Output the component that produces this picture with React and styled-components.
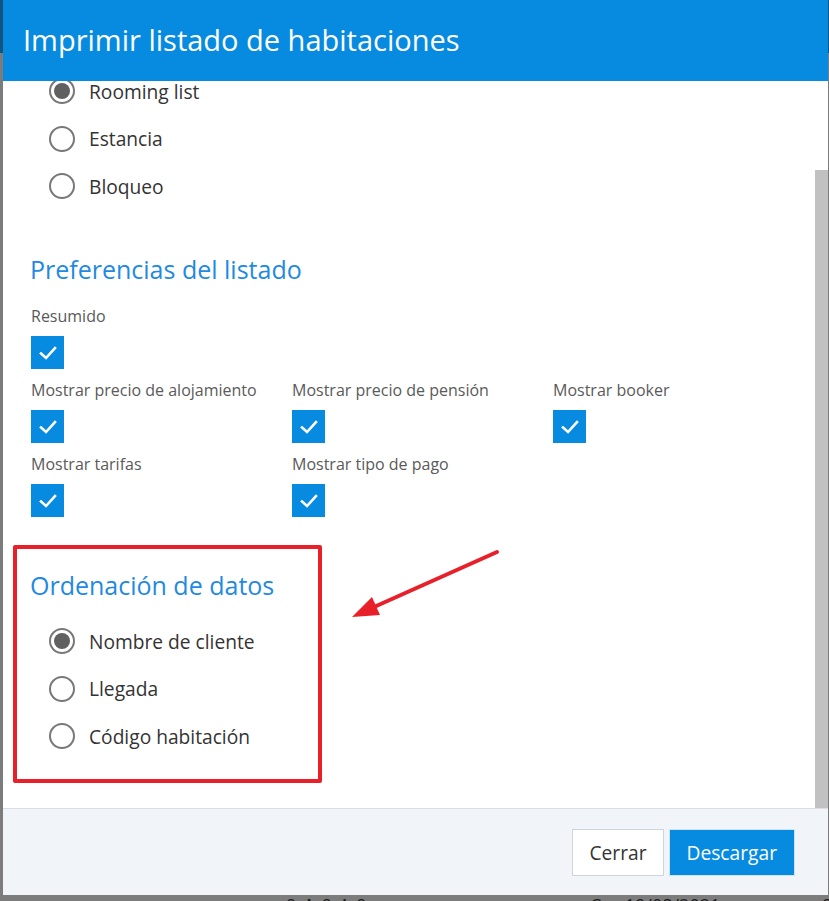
import React from "react";
import styled, { createGlobalStyle } from "styled-components";

const Global = createGlobalStyle`
  html, body { margin: 0; padding: 0; }
  body {
    font-family: "Open Sans", "Liberation Sans", sans-serif;
    background: #7c7c7c;
    overflow: hidden;
  }
  #root { height: 901px; overflow: hidden; }
`;

const Backdrop = styled.div`
  width: 829px;
  height: 901px;
  display: flex;
  flex-direction: column;
  background: linear-gradient(to bottom, #0f5680 0 53px, #7c7c7c 53px);
`;

const Modal = styled.div`
  position: relative;
  margin-left: 3px;
  width: 825px;
  height: 895px;
  flex: none;
  display: flex;
  flex-direction: column;
  background: #fff;
`;

const Header = styled.div`
  height: 81px;
  flex: none;
  background: #078be1;
  display: flex;
  align-items: center;
  padding-left: 20px;
  position: relative;
  z-index: 1;
`;

const Title = styled.h1`
  margin: 0;
  font-size: 29px;
  font-weight: 400;
  color: #fff;
  padding-bottom: 3px;
`;

const Body = styled.div`
  flex: 1;
  display: flex;
  overflow: hidden;
`;

const Content = styled.div`
  flex: 1;
  padding-left: 28px;
  display: flex;
  flex-direction: column;
`;

const ScrollTrack = styled.div`
  width: 13px;
  flex: none;
  display: flex;
  flex-direction: column;
`;

const ScrollThumb = styled.div`
  margin-top: 89px;
  flex: 1;
  background: #c1c1c1;
`;

const RadioList = styled.div`
  display: flex;
  flex-direction: column;
  gap: ${(p) => p.$gap || 23.5}px;
  margin: ${(p) => p.$margin || "0"};
  padding-left: 18px;
`;

const RadioRow = styled.label`
  display: flex;
  align-items: center;
  height: 24px;
  gap: 14px;
  font-size: 19.2px;
  color: #333;
  white-space: nowrap;
`;

const RadioCircle = styled.span`
  box-sizing: border-box;
  width: 26px;
  height: 26px;
  border-radius: 50%;
  border: 2px solid #787878;
  display: flex;
  align-items: center;
  justify-content: center;
  flex: none;
  &::after {
    content: "";
    width: 16px;
    height: 16px;
    border-radius: 50%;
    background: ${(p) => (p.$checked ? "#606060" : "transparent")};
  }
`;

const SectionTitle = styled.h2`
  margin: ${(p) => p.$margin || "0"};
  margin-left: -1px;
  font-size: 25px;
  line-height: 32px;
  font-weight: 400;
  color: #1f8ae2;
  white-space: nowrap;
`;

const FieldGrid = styled.div`
  display: grid;
  grid-template-columns: repeat(3, 261px);
  row-gap: 10px;
  margin-top: ${(p) => p.$mt || 0}px;
`;

const Field = styled.div`
  display: flex;
  flex-direction: column;
  align-items: flex-start;
  gap: 11px;
  grid-column: ${(p) => (p.$full ? "1 / -1" : "auto")};
`;

const FieldLabel = styled.span`
  font-size: 16px;
  line-height: 20px;
  color: #5a5a5a;
  white-space: nowrap;
  margin-top: 1px;
  margin-bottom: -1px;
`;

const CheckBox = styled.span`
  width: 33px;
  height: 33px;
  background: #078be1;
  display: flex;
  align-items: center;
  justify-content: center;
`;

const Highlight = styled.div`
  margin: 28px 0 0 -18px;
  width: 309px;
  box-sizing: border-box;
  border: 4px solid #e8202a;
  border-radius: 2px;
  padding: 20px 0 31px 14px;
  display: flex;
  flex-direction: column;
`;

const Arrow = styled.svg`
  position: absolute;
  left: 337px;
  top: 540px;
  z-index: 2;
`;

const Footer = styled.div`
  height: 87px;
  flex: none;
  box-sizing: border-box;
  border-top: 1px solid #d9dee4;
  background: #f1f5f9;
  display: flex;
  justify-content: flex-end;
  align-items: flex-start;
  gap: 5px;
  padding: 20px 33px 0 0;
`;

const Button = styled.button`
  height: 47px;
  box-sizing: border-box;
  padding: 0 ${(p) => (p.$primary ? 17 : 16)}px;
  font-family: "Open Sans", "Liberation Sans", sans-serif;
  font-size: 19.2px;
  border: 1px solid ${(p) => (p.$primary ? "#cfe3f2" : "#cdd4dc")};
  background: ${(p) => (p.$primary ? "#078be1" : "#fff")};
  color: ${(p) => (p.$primary ? "#fff" : "#333")};
  cursor: pointer;
`;

const BackdropRow = styled.div`
  height: 6px;
  overflow: hidden;
  position: relative;
  font-family: "Open Sans", sans-serif;
  font-size: 18px;
  line-height: 18px;
  color: #1d1d1d;
  white-space: pre;
`;

const Ghost = styled.span`
  position: absolute;
  top: 1px;
  left: ${(p) => p.$x}px;
`;

const Check = () => (
  <svg width="18" height="14" viewBox="0 0 18 14">
    <path d="M2 7.5 L7 12 L16 2" fill="none" stroke="#fff" strokeWidth="2.6" strokeLinecap="square" />
  </svg>
);

const Radio = ({ label, checked }) => (
  <RadioRow>
    <RadioCircle $checked={checked} />
    {label}
  </RadioRow>
);

const Checked = ({ label, full }) => (
  <Field $full={full}>
    <FieldLabel>{label}</FieldLabel>
    <CheckBox>
      <Check />
    </CheckBox>
  </Field>
);

export default function App() {
  return (
    <Backdrop>
      <Global />
      <Modal>
        <Header>
          <Title>Imprimir listado de habitaciones</Title>
        </Header>
        <Body>
          <Content>
            <RadioList $margin="-2px 0 0 0">
              <Radio label="Rooming list" checked />
              <Radio label="Estancia" />
              <Radio label="Bloqueo" />
            </RadioList>
            <SectionTitle $margin="55px 0 0 0">Preferencias del listado</SectionTitle>
            <FieldGrid $mt={20}>
              <Checked label="Resumido" full />
              <Checked label="Mostrar precio de alojamiento" />
              <Checked label="Mostrar precio de pensión" />
              <Checked label="Mostrar booker" />
              <Checked label="Mostrar tarifas" />
              <Checked label="Mostrar tipo de pago" />
            </FieldGrid>
            <Highlight>
              <SectionTitle>Ordenación de datos</SectionTitle>
              <RadioList $margin="28px 0 0 0">
                <Radio label="Nombre de cliente" checked />
                <Radio label="Llegada" />
                <Radio label="Código habitación" />
              </RadioList>
            </Highlight>
          </Content>
          <ScrollTrack>
            <ScrollThumb />
          </ScrollTrack>
        </Body>
        <Footer>
          <Button>Cerrar</Button>
          <Button $primary>Descargar</Button>
        </Footer>
        <Arrow width="170" height="90" viewBox="0 0 170 90">
          <line x1="157" y1="12" x2="34" y2="67" stroke="#e8202a" strokeWidth="4" strokeLinecap="round" />
          <polygon points="12,77 32,57 40,75" fill="#e8202a" />
        </Arrow>
      </Modal>
      <BackdropRow>
        <Ghost $x={286}>9 ♟ 9 ✲ 9 ♣</Ghost>
        <Ghost $x={590}>C     10/08/2021</Ghost>
        <Ghost $x={822}>9</Ghost>
      </BackdropRow>
    </Backdrop>
  );
}
